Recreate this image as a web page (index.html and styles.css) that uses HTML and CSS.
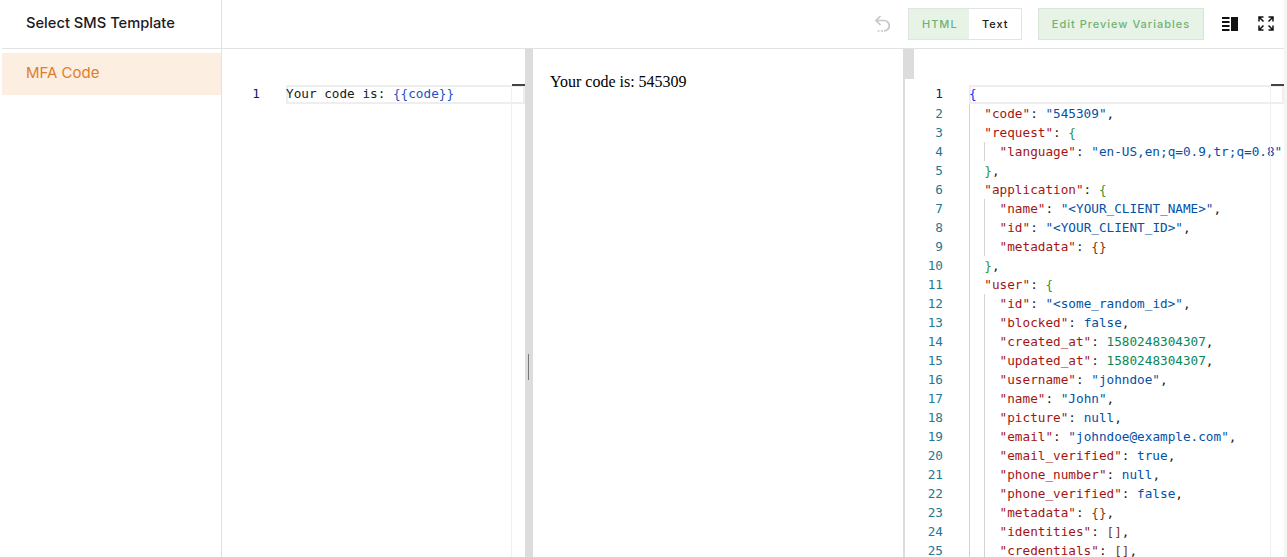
FILE: index.html
```html
<!DOCTYPE html>
<html lang="en">
<head>
<meta charset="utf-8">
<title>Select SMS Template</title>
<link rel="stylesheet" href="styles.css">
</head>
<body>
<div class="app">
  <aside class="sidebar">
    <div class="side-head">Select SMS Template</div>
    <div class="side-list"><div class="side-item">MFA Code</div></div>
  </aside>
  <main class="main">
    <header class="toolbar">
      <svg class="ic-undo" width="16" height="18" viewBox="0 0 16 18" fill="none" stroke="#c6c6c6" stroke-width="1.700"><path d="M6.500 1 2 5.500 6.500 10"/><path d="M2.500 5.500h7.500a4.800 4.800 0 0 1 0 10.500"/><path d="M3.500 16h2M7 16h2"/></svg>
      <div class="seg">
        <div class="seg-btn seg-on">HTML</div>
        <div class="seg-btn">Text</div>
      </div>
      <div class="edit-btn">Edit Preview Variables</div>
      <svg class="ic-split" width="16" height="14" viewBox="0 0 16 14" fill="#111"><rect x="0" y="0" width="7.500" height="2"/><rect x="0" y="4" width="7.500" height="2"/><rect x="0" y="8" width="7.500" height="2"/><rect x="0" y="12" width="7.500" height="2"/><rect x="9" y="0" width="7" height="14"/></svg>
      <svg class="ic-expand" width="16" height="15" viewBox="0 0 16 15" fill="none" stroke="#111" stroke-width="1.500"><path d="M1 5.500V1h4.500M1 1l4.500 4.500"/><path d="M15 5.500V1h-4.500M15 1l-4.500 4.500"/><path d="M1 9.500V14h4.500M1 14l4.500-4.500"/><path d="M15 9.500V14h-4.500M15 14l-4.500-4.500"/></svg>
    </header>
    <div class="panes">
      <section class="editor editor-left">
        <div class="ruler-mark"></div>
        <div class="minimap-line"></div>
        <div class="ln active"><span class="num cur">1</span><span class="code">Your code is: <span class="hb">{{code}}</span></span></div>
      </section>
      <div class="divider"><div class="grip"></div></div>
      <section class="preview">Your code is: 545309</section>
      <div class="divider-right"><div class="divider-cap"></div></div>
      <section class="editor editor-right">
        <div class="ruler-mark"></div>
        <div class="minimap-line"></div>
        <div class="ln active"><span class="num cur">1</span><span class="code"><span class="b1">{</span></span></div>
        <div class="ln"><span class="num">2</span><span class="code"><span class="g"></span><span class="k">"code"</span>: <span class="s">"545309"</span>,</span></div>
        <div class="ln"><span class="num">3</span><span class="code"><span class="g"></span><span class="k">"request"</span>: <span class="b2">{</span></span></div>
        <div class="ln"><span class="num">4</span><span class="code"><span class="g"></span><span class="g"></span><span class="k">"language"</span>: <span class="s">"en-US,en;q=0.9,tr;q=0.8"</span></span></div>
        <div class="ln"><span class="num">5</span><span class="code"><span class="g"></span><span class="b2">}</span>,</span></div>
        <div class="ln"><span class="num">6</span><span class="code"><span class="g"></span><span class="k">"application"</span>: <span class="b2">{</span></span></div>
        <div class="ln"><span class="num">7</span><span class="code"><span class="g"></span><span class="g"></span><span class="k">"name"</span>: <span class="s">"&lt;YOUR_CLIENT_NAME&gt;"</span>,</span></div>
        <div class="ln"><span class="num">8</span><span class="code"><span class="g"></span><span class="g"></span><span class="k">"id"</span>: <span class="s">"&lt;YOUR_CLIENT_ID&gt;"</span>,</span></div>
        <div class="ln"><span class="num">9</span><span class="code"><span class="g"></span><span class="g"></span><span class="k">"metadata"</span>: <span class="b3">{}</span></span></div>
        <div class="ln"><span class="num">10</span><span class="code"><span class="g"></span><span class="b2">}</span>,</span></div>
        <div class="ln"><span class="num">11</span><span class="code"><span class="g"></span><span class="k">"user"</span>: <span class="b2">{</span></span></div>
        <div class="ln"><span class="num">12</span><span class="code"><span class="g"></span><span class="g"></span><span class="k">"id"</span>: <span class="s">"&lt;some_random_id&gt;"</span>,</span></div>
        <div class="ln"><span class="num">13</span><span class="code"><span class="g"></span><span class="g"></span><span class="k">"blocked"</span>: <span class="s">false</span>,</span></div>
        <div class="ln"><span class="num">14</span><span class="code"><span class="g"></span><span class="g"></span><span class="k">"created_at"</span>: <span class="n">1580248304307</span>,</span></div>
        <div class="ln"><span class="num">15</span><span class="code"><span class="g"></span><span class="g"></span><span class="k">"updated_at"</span>: <span class="n">1580248304307</span>,</span></div>
        <div class="ln"><span class="num">16</span><span class="code"><span class="g"></span><span class="g"></span><span class="k">"username"</span>: <span class="s">"johndoe"</span>,</span></div>
        <div class="ln"><span class="num">17</span><span class="code"><span class="g"></span><span class="g"></span><span class="k">"name"</span>: <span class="s">"John"</span>,</span></div>
        <div class="ln"><span class="num">18</span><span class="code"><span class="g"></span><span class="g"></span><span class="k">"picture"</span>: <span class="s">null</span>,</span></div>
        <div class="ln"><span class="num">19</span><span class="code"><span class="g"></span><span class="g"></span><span class="k">"email"</span>: <span class="s">"johndoe@example.com"</span>,</span></div>
        <div class="ln"><span class="num">20</span><span class="code"><span class="g"></span><span class="g"></span><span class="k">"email_verified"</span>: <span class="s">true</span>,</span></div>
        <div class="ln"><span class="num">21</span><span class="code"><span class="g"></span><span class="g"></span><span class="k">"phone_number"</span>: <span class="s">null</span>,</span></div>
        <div class="ln"><span class="num">22</span><span class="code"><span class="g"></span><span class="g"></span><span class="k">"phone_verified"</span>: <span class="s">false</span>,</span></div>
        <div class="ln"><span class="num">23</span><span class="code"><span class="g"></span><span class="g"></span><span class="k">"metadata"</span>: <span class="b3">{}</span>,</span></div>
        <div class="ln"><span class="num">24</span><span class="code"><span class="g"></span><span class="g"></span><span class="k">"identities"</span>: <span class="b3">[]</span>,</span></div>
        <div class="ln"><span class="num">25</span><span class="code"><span class="g"></span><span class="g"></span><span class="k">"credentials"</span>: <span class="b3">[]</span>,</span></div>
      </section>
    </div>
  </main>
  <div class="edge-strip"></div>
</div>
</body>
</html>
```
FILE: styles.css
```css
* { box-sizing: border-box; }
html, body { margin: 0; height: 100%; overflow: hidden; background: #fff; }
.app { display: flex; height: 557px; padding-left: 2px; font-family: Inter, "Liberation Sans", sans-serif; }
.sidebar { width: 220px; flex: none; border-right: 1px solid #e2e2e2; }
.side-head { height: 49px; border-bottom: 1px solid #e2e2e2; padding: 14px 0 0 24px; font-size: 14.700px; line-height: 18px; font-weight: 500; color: #1b1b1f; }
.side-list { padding-top: 4px; }
.side-item { height: 42px; background: #fdeee2; color: #e07d2a; font-size: 15px; line-height: 40px; padding-left: 24px; }
.main { flex: 1; min-width: 0; display: flex; flex-direction: column; }
.edge-strip { width: 3px; flex: none; background: #f5f5f5; }
.toolbar { height: 49px; flex: none; border-bottom: 1px solid #e2e2e2; display: flex; align-items: center; justify-content: flex-end; padding: 0 10px 1px 0; }
.ic-undo { margin-right: 18px; }
.seg { display: flex; height: 32px; border: 1px solid #dfe5df; margin-right: 16px; }
.seg-btn { font-size: 11px; letter-spacing: 1px; line-height: 30px; font-weight: 500; color: #1a1a1a; padding: 0 13px; width: 52px; }
.seg-on { background: #e8f3e8; color: #6fb274; width: 60px; font-weight: 500; }
.edit-btn { height: 32px; width: 166px; border: 1px solid #d6e6d6; background: #e8f3e8; color: #6fb274; font-size: 11px; font-weight: 500; letter-spacing: 1px; line-height: 30px; text-align: center; margin-right: 18px; white-space: nowrap; }
.ic-split { margin-right: 20px; }
.panes { flex: 1; min-height: 0; display: flex; }
.editor { position: relative; overflow: hidden; padding-top: 36px; font-family: "DejaVu Sans Mono", monospace; font-size: 12.700px; color: #1a1a1a; }
.editor-left { width: 303px; flex: none; }
.editor-right { flex: 1; min-width: 0; }
.ln { display: flex; height: 19px; line-height: 19px; white-space: pre; }
.num { width: 38px; flex: none; text-align: right; color: #237893; margin-right: 26px; }
.cur { color: #0b216f; }
.code { flex: 1; min-width: 0; }
.active { line-height: 18px; }
.active .code { box-shadow: inset 0 0 0 2px #eeeeee; }
.ruler-mark { position: absolute; right: 0; top: 35px; width: 13px; height: 2px; background: #444; z-index: 2; }
.minimap-line { position: absolute; right: 13px; top: 36px; bottom: 0; width: 1px; background: #f0f0f0; z-index: 2; }
.hb { color: #1f4fc4; }
.g { display: inline-block; width: 15.300px; height: 19px; vertical-align: top; border-left: 1px solid #d3d3d3; }
.k { color: #a31515; }
.s { color: #0451a5; }
.n { color: #098658; }
.b1 { color: #0431fa; }
.b2 { color: #319331; }
.b3 { color: #7b3814; }
.divider { width: 8px; flex: none; background: #dcdcdc; position: relative; }
.grip { position: absolute; left: 3px; top: 305px; width: 1px; height: 26px; background: #777; }
.preview { width: 370px; flex: none; padding: 24px 0 0 17px; font-family: "Liberation Serif", serif; font-size: 16px; line-height: 18px; color: #000; }
.divider-right { width: 2px; flex: none; background: #dcdcdc; position: relative; }
.divider-cap { position: absolute; left: 0; top: 0; width: 11px; height: 30px; background: #dcdcdc; z-index: 3; }
```
